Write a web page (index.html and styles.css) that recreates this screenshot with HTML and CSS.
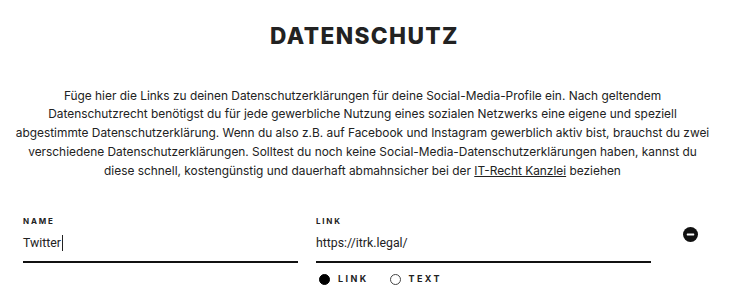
FILE: index.html
```html
<!DOCTYPE html>
<html lang="de">
<head>
<meta charset="utf-8">
<link rel="stylesheet" href="styles.css">
</head>
<body>
<main class="page">
  <header class="head">
    <h1 class="title">DATENSCHUTZ</h1>
    <p class="intro">Füge hier die Links zu deinen Datenschutzerklärungen für deine Social-Media-Profile ein. Nach geltendem<br>Datenschutzrecht benötigst du für jede gewerbliche Nutzung eines sozialen Netzwerks eine eigene und speziell<br>abgestimmte Datenschutzerklärung. Wenn du also z.B. auf Facebook und Instagram gewerblich aktiv bist, brauchst du zwei<br>verschiedene Datenschutzerklärungen. Solltest du noch keine Social-Media-Datenschutzerklärungen haben, kannst du<br>diese schnell, kostengünstig und dauerhaft abmahnsicher bei der <a href="#" class="link">IT-Recht Kanzlei</a> beziehen</p>
  </header>
  <div class="row">
    <div class="field">
      <label class="label">NAME</label>
      <div class="input"><span>Twitter</span><span class="caret"></span></div>
    </div>
    <div class="field">
      <label class="label">LINK</label>
      <div class="input"><span>https://itrk.legal/</span></div>
      <div class="radios">
        <span class="radio"><span class="dot on"></span>LINK</span>
        <span class="radio"><span class="dot"></span>TEXT</span>
      </div>
    </div>
    <div class="remove">
      <svg width="15" height="15" viewBox="0 0 16 16"><circle cx="8" cy="8" r="8" fill="#111"/><rect x="4" y="7" width="8" height="2" rx="0.5" fill="#fff"/></svg>
    </div>
  </div>
</main>
</body>
</html>
```
FILE: styles.css
```css
html, body { margin: 0; padding: 0; background: #fff; }
body { font-family: Inter, "Noto Sans", sans-serif; color: #222; }
.page { padding: 0 23px; }
.head { padding-right: 18px; }
.title {
  margin: 0;
  padding-top: 23px;
  text-align: center;
  font-size: 22.7px;
  font-weight: 800;
  letter-spacing: 1.4px;
  line-height: 26px;
  color: #222;
}
.intro {
  margin: 37.5px -20px 0 -24px;
  text-align: center;
  font-size: 11.9px;
  line-height: 18.75px;
  color: #222;
  white-space: nowrap;
}
.link { color: #222; text-decoration: underline; }
.row {
  margin-top: 36px;
  display: grid;
  grid-template-columns: 275px 335px 1fr;
  column-gap: 18px;
}
.label {
  display: block;
  font-size: 8px;
  font-weight: 700;
  letter-spacing: 1.8px;
  color: #222;
  line-height: 10px;
}
.input {
  margin-top: 6px;
  height: 29px;
  border-bottom: 2px solid #111;
  font-family: Roboto, "Liberation Sans", sans-serif;
  font-size: 12.3px;
  line-height: 22px;
  color: #222;
  display: flex;
  align-items: flex-start;
}
.caret { display: inline-block; width: 1px; height: 16px; background: #222; margin: 3px 0 0 1px; }
.radios { display: flex; gap: 21px; margin-top: 9px; padding-left: 3px; }
.radio {
  display: flex;
  align-items: center;
  gap: 8px;
  font-size: 9px;
  font-weight: 700;
  letter-spacing: 2.4px;
  color: #222;
  line-height: 14px;
}
.dot { width: 11px; height: 11px; border-radius: 50%; border: 1.5px solid #444; box-sizing: border-box; }
.dot.on { background: #000; border-color: #000; }
.remove { padding-left: 14px; padding-top: 11px; }
.remove svg { display: block; }
```
